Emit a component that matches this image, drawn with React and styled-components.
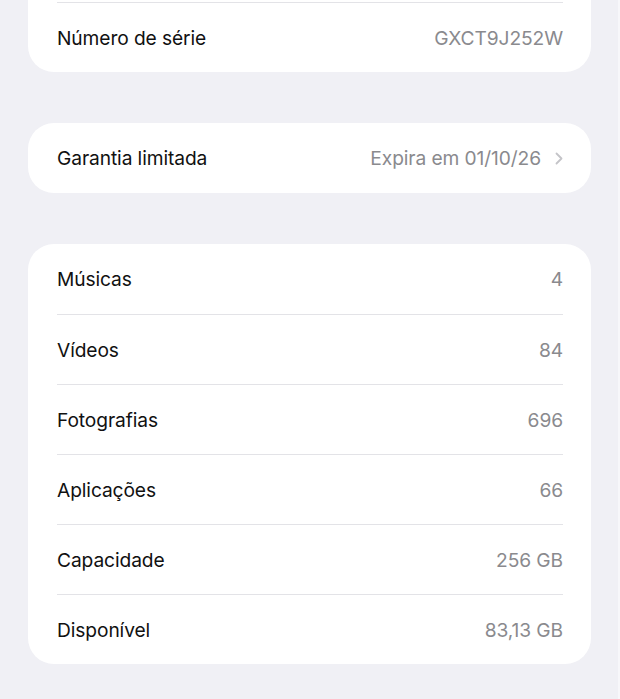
import React from 'react';
import styled, { createGlobalStyle } from 'styled-components';

const GlobalStyle = createGlobalStyle`
  html, body {
    margin: 0;
    padding: 0;
    background: #f0f0f5;
  }
  body {
    font-family: Inter, "Noto Sans", "Liberation Sans", sans-serif;
    -webkit-font-smoothing: antialiased;
  }
`;

const Page = styled.div`
  width: 620px;
  height: 699px;
  box-sizing: border-box;
  background: #f0f0f5;
  padding: 0 27px 0 28px;
  display: flex;
  flex-direction: column;
  gap: 51px;
  overflow: hidden;
  border-right: 2px solid #f7f7fa;
`;

const Card = styled.div`
  background: #fff;
  border-radius: ${p => (p.$cut ? '0 0 26px 26px' : '26px')};
  padding: ${p => (p.$cut ? '2px 28px 0 29px' : '0 28px 0 29px')};
  display: flex;
  flex-direction: column;
`;

const Row = styled.div`
  height: 70px;
  box-sizing: border-box;
  display: flex;
  align-items: center;
  justify-content: space-between;
  border-top: ${p => (p.$line ? '1px solid #e3e3e7' : 'none')};
  font-size: 19.2px;
  letter-spacing: -0.1px;
`;

const Label = styled.span`
  color: #111;
`;

const Value = styled.span`
  color: #8a8a8e;
  display: flex;
  align-items: center;
  gap: 14px;
`;

const Chevron = () => (
  <svg width="8" height="13" viewBox="0 0 8 13" fill="none">
    <path d="M1.5 1.5 L6.5 6.5 L1.5 11.5" stroke="#c4c4c8" strokeWidth="1.8" strokeLinecap="round" strokeLinejoin="round" />
  </svg>
);

const stats = [
  ['Músicas', '4'],
  ['Vídeos', '84'],
  ['Fotografias', '696'],
  ['Aplicações', '66'],
  ['Capacidade', '256 GB'],
  ['Disponível', '83,13 GB'],
];

export default function App() {
  return (
    <>
      <GlobalStyle />
      <Page>
        <Card $cut>
          <Row $line>
            <Label>Número de série</Label>
            <Value>GXCT9J252W</Value>
          </Row>
        </Card>
        <Card>
          <Row>
            <Label>Garantia limitada</Label>
            <Value>
              Expira em 01/10/26
              <Chevron />
            </Value>
          </Row>
        </Card>
        <Card>
          {stats.map(([label, value], i) => (
            <Row key={label} $line={i > 0}>
              <Label>{label}</Label>
              <Value>{value}</Value>
            </Row>
          ))}
        </Card>
      </Page>
    </>
  );
}
